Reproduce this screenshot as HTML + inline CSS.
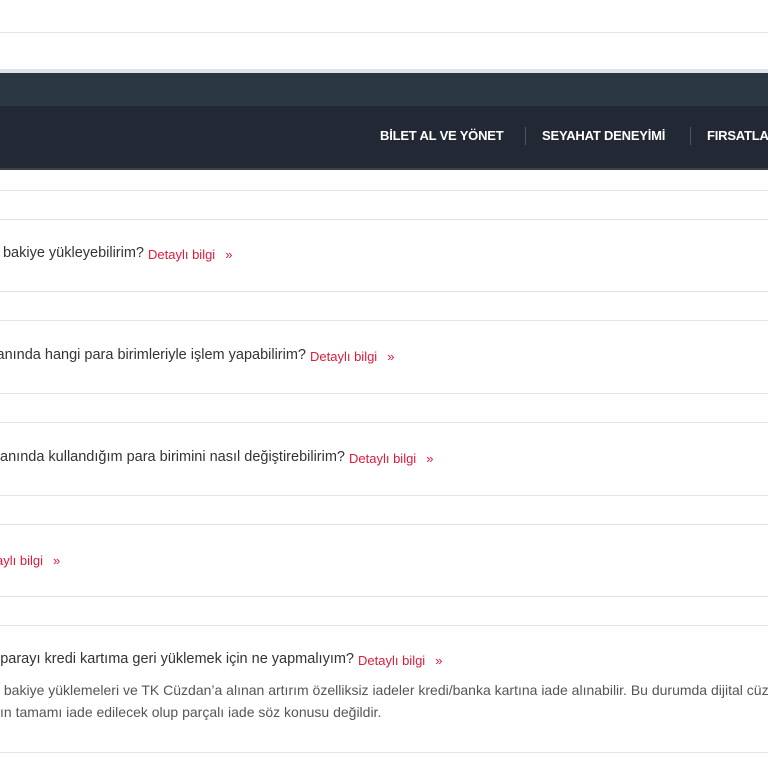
<!DOCTYPE html>
<html><head><meta charset="utf-8"><style>
html,body{margin:0;width:768px;height:768px;overflow:hidden;}
body{background:#fff;position:relative;font-family:"Liberation Sans",sans-serif;}
.l{position:absolute;left:0;width:768px;height:1px;background:#e3e3e3}
.w{position:absolute;left:0;overflow:hidden;height:22px}
.q{position:absolute;right:0;top:0;white-space:nowrap;font-size:14.5px;color:#333}
.a{position:absolute;white-space:nowrap;font-size:13px;color:#e0193b}
.a b{font-weight:normal;margin-left:10px}
.nav{position:absolute;top:128px;font-size:13px;font-weight:bold;color:#fff;white-space:nowrap;letter-spacing:-0.2px}
.sep{position:absolute;top:127px;width:1px;height:18px;background:#4a525d}
.p{position:absolute;white-space:nowrap;font-size:14px;color:#555;width:768px;overflow:hidden}
</style></head><body>
<div class="l" style="top:32px"></div>
<div style="position:absolute;top:69px;left:0;width:768px;height:4px;background:#dfe4ea"></div>
<div style="position:absolute;top:73px;left:0;width:768px;height:33px;background:#2c3744"></div>
<div style="position:absolute;top:106px;left:0;width:768px;height:63px;background:#232934"></div>
<div style="position:absolute;top:168px;left:0;width:768px;height:2px;background:#3d4247"></div>
<div class="nav" style="left:380px">BİLET AL VE YÖNET</div>
<div class="sep" style="left:525px"></div>
<div class="nav" style="left:542px">SEYAHAT DENEYİMİ</div>
<div class="sep" style="left:690px"></div>
<div class="nav" style="left:707px;width:61px;overflow:hidden">FIRSATLAR</div>
<div class="l" style="top:190px"></div><div class="l" style="top:219px"></div>
<div class="w" style="top:245px;width:144px"><span class="q">Nasıl bakiye yükleyebilirim?</span></div>
<div class="a" style="left:148px;top:247px">Detaylı bilgi<b>»</b></div>
<div class="l" style="top:291px"></div><div class="l" style="top:320px"></div>
<div class="w" style="top:347px;width:306px"><span class="q">TK Cüzdanında hangi para birimleriyle işlem yapabilirim?</span></div>
<div class="a" style="left:310px;top:349px">Detaylı bilgi<b>»</b></div>
<div class="l" style="top:393px"></div><div class="l" style="top:422px"></div>
<div class="w" style="top:449px;width:345px"><span class="q">TK Cüzdanında kullandığım para birimini nasıl değiştirebilirim?</span></div>
<div class="a" style="left:349px;top:451px">Detaylı bilgi<b>»</b></div>
<div class="l" style="top:495px"></div><div class="l" style="top:524px"></div>
<div class="a" style="left:-4px;top:553px">aylı bilgi<b>»</b></div>
<div class="l" style="top:596px"></div><div class="l" style="top:625px"></div>
<div class="w" style="top:651px;width:354px"><span class="q">TK Cüzdanındaki parayı kredi kartıma geri yüklemek için ne yapmalıyım?</span></div>
<div class="a" style="left:358px;top:653px">Detaylı bilgi<b>»</b></div>
<div class="p" style="top:682px;left:0">&nbsp;bakiye yüklemeleri ve TK Cüzdan’a alınan artırım özelliksiz iadeler kredi/banka kartına iade alınabilir. Bu durumda dijital cüzdan</div>
<div class="p" style="top:704px;left:0">ın tamamı iade edilecek olup parçalı iade söz konusu değildir.</div>
<div class="l" style="top:752px"></div>
</body></html>
